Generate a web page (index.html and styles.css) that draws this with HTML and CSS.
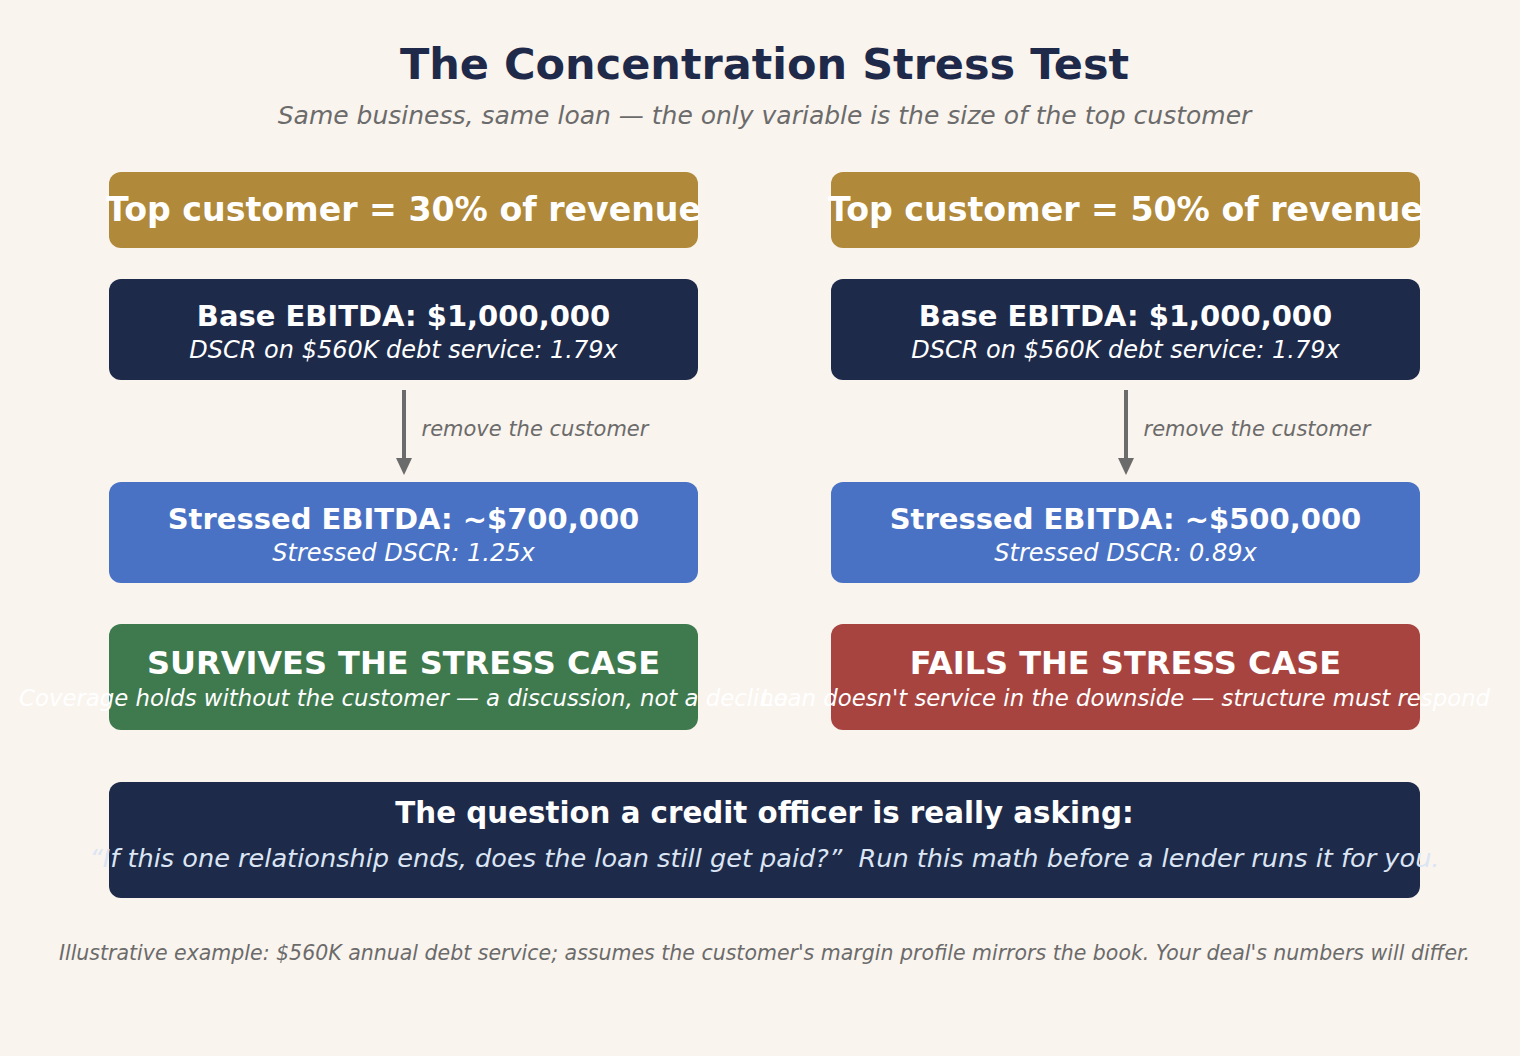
FILE: index.html
```html
<!DOCTYPE html>
<html lang="en">
<head>
<meta charset="utf-8">
<title>The Concentration Stress Test</title>
<link rel="stylesheet" href="styles.css">
</head>
<body>
<main class="page">
  <header class="head">
    <h1 class="title">The Concentration Stress Test</h1>
    <p class="subtitle">Same business, same loan — the only variable is the size of the top customer</p>
  </header>

  <section class="columns">
    <div class="col">
      <div class="box box-gold"><span class="gold-text">Top customer = 30% of revenue</span></div>
      <div class="box box-dark box-pair">
        <span class="pair-title">Base EBITDA: $1,000,000</span>
        <span class="pair-sub">DSCR on $560K debt service: 1.79x</span>
      </div>
      <div class="step">
        <span></span>
        <svg class="arrow" width="18" height="86" viewBox="0 0 18 86" aria-hidden="true">
          <line x1="9" y1="0" x2="9" y2="72" stroke="#6b6b6b" stroke-width="4"/>
          <polygon points="1,68 17,68 9,85" fill="#6b6b6b"/>
        </svg>
        <span class="step-label">remove the customer</span>
      </div>
      <div class="box box-blue box-pair">
        <span class="pair-title">Stressed EBITDA: ~$700,000</span>
        <span class="pair-sub">Stressed DSCR: 1.25x</span>
      </div>
      <div class="box box-green box-verdict">
        <span class="verdict-title">SURVIVES THE STRESS CASE</span>
        <span class="verdict-sub">Coverage holds without the customer — a discussion, not a decline</span>
      </div>
    </div>

    <div class="col">
      <div class="box box-gold"><span class="gold-text">Top customer = 50% of revenue</span></div>
      <div class="box box-dark box-pair">
        <span class="pair-title">Base EBITDA: $1,000,000</span>
        <span class="pair-sub">DSCR on $560K debt service: 1.79x</span>
      </div>
      <div class="step">
        <span></span>
        <svg class="arrow" width="18" height="86" viewBox="0 0 18 86" aria-hidden="true">
          <line x1="9" y1="0" x2="9" y2="72" stroke="#6b6b6b" stroke-width="4"/>
          <polygon points="1,68 17,68 9,85" fill="#6b6b6b"/>
        </svg>
        <span class="step-label">remove the customer</span>
      </div>
      <div class="box box-blue box-pair">
        <span class="pair-title">Stressed EBITDA: ~$500,000</span>
        <span class="pair-sub">Stressed DSCR: 0.89x</span>
      </div>
      <div class="box box-red box-verdict">
        <span class="verdict-title">FAILS THE STRESS CASE</span>
        <span class="verdict-sub">Loan doesn't service in the downside — structure must respond</span>
      </div>
    </div>
  </section>

  <section class="box box-dark question">
    <span class="question-title">The question a credit officer is really asking:</span>
    <span class="question-quote">“If this one relationship ends, does the loan still get paid?”&nbsp; Run this math before a lender runs it for you.</span>
  </section>

  <p class="footnote">Illustrative example: $560K annual debt service; assumes the customer's margin profile mirrors the book. Your deal's numbers will differ.</p>
</main>
</body>
</html>
```

FILE: styles.css
```css
* { box-sizing: border-box; }

html, body {
  margin: 0;
  background: #faf4ee;
}

body {
  padding-left: 9px;
  font-family: "DejaVu Sans", "Liberation Sans", sans-serif;
}

.page {
  width: 1311px;
  margin: 0 auto;
}

.head {
  display: flex;
  flex-direction: column;
  align-items: center;
  padding-top: 39px;
}

.title {
  margin: 0;
  font-size: 43px;
  line-height: 50px;
  font-weight: bold;
  color: #1f2a4a;
  white-space: nowrap;
}

.subtitle {
  margin: 12px 0 0;
  font-size: 25px;
  line-height: 30px;
  font-style: italic;
  color: #6b6b6b;
  white-space: nowrap;
}

.columns {
  display: grid;
  grid-template-columns: 589px 589px;
  column-gap: 133px;
  margin-top: 41px;
}

.col {
  display: flex;
  flex-direction: column;
}

.box {
  border-radius: 12px;
  color: #ffffff;
  display: flex;
  flex-direction: column;
  align-items: center;
  justify-content: center;
}

.box-gold { background: #b0893a; height: 76px; }
.box-dark { background: #1e2a4a; }
.box-blue { background: #4a72c4; }
.box-green { background: #3f7a4f; }
.box-red { background: #a84440; }

.gold-text {
  font-size: 33.2px;
  line-height: 38px;
  font-weight: bold;
  white-space: nowrap;
}

.box-pair {
  height: 101px;
  padding-top: 4px;
}

.col .box-dark { margin-top: 31px; }

.pair-title {
  font-size: 29px;
  line-height: 34px;
  font-weight: bold;
  white-space: nowrap;
}

.pair-sub {
  margin-top: 2px;
  font-size: 24px;
  line-height: 30px;
  font-style: italic;
  white-space: nowrap;
}

.step {
  height: 102px;
  display: grid;
  grid-template-columns: 1fr 18px 1fr;
  align-items: center;
}

.arrow {
  display: block;
  align-self: start;
  margin-top: 10px;
}

.step-label {
  padding-left: 9px;
  padding-bottom: 5px;
  font-size: 21px;
  line-height: 26px;
  font-style: italic;
  color: #6b6b6b;
  white-space: nowrap;
}

.box-verdict {
  height: 106px;
  margin-top: 41px;
  padding-top: 2px;
}

.verdict-title {
  font-size: 32px;
  line-height: 38px;
  font-weight: bold;
  white-space: nowrap;
}

.verdict-sub {
  margin-top: 2px;
  font-size: 22.8px;
  line-height: 28px;
  font-style: italic;
  white-space: nowrap;
}

.question {
  margin-top: 52px;
  height: 116px;
  justify-content: flex-start;
  padding-top: 14px;
}

.question-title {
  font-size: 29.3px;
  line-height: 34px;
  font-weight: bold;
  white-space: nowrap;
}

.question-quote {
  margin-top: 13px;
  font-size: 25.6px;
  line-height: 30px;
  font-style: italic;
  color: #dbe5f4;
  white-space: nowrap;
}

.footnote {
  margin: 42px 0 0;
  font-size: 20.5px;
  line-height: 26px;
  font-style: italic;
  color: #6b6b6b;
  white-space: nowrap;
  display: flex;
  justify-content: center;
}
```
